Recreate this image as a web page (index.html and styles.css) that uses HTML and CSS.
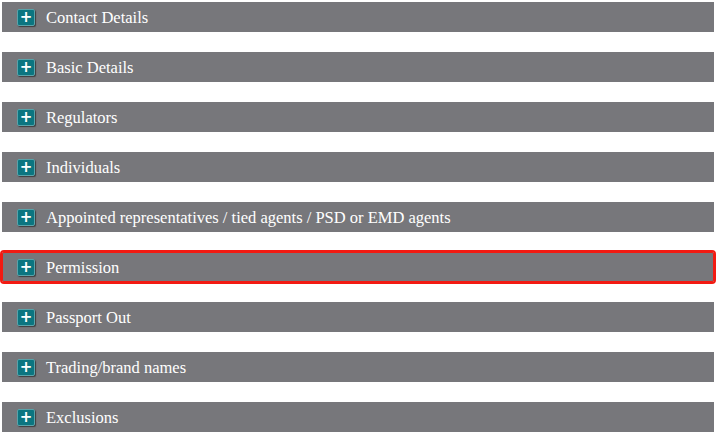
FILE: index.html
```html
<!DOCTYPE html>
<html lang="en">
<head>
    <meta charset="UTF-8">
    <title>Firm details</title>
    <link rel="stylesheet" href="styles.css">
</head>
<body>
    <div class="sections">
        <div class="section"><span class="toggle">+</span><span class="title">Contact Details</span></div>
        <div class="section"><span class="toggle">+</span><span class="title">Basic Details</span></div>
        <div class="section"><span class="toggle">+</span><span class="title">Regulators</span></div>
        <div class="section"><span class="toggle">+</span><span class="title">Individuals</span></div>
        <div class="section"><span class="toggle">+</span><span class="title">Appointed representatives / tied agents / PSD or EMD agents</span></div>
        <div class="section active"><span class="toggle">+</span><span class="title">Permission</span></div>
        <div class="section"><span class="toggle">+</span><span class="title">Passport Out</span></div>
        <div class="section"><span class="toggle">+</span><span class="title">Trading/brand names</span></div>
        <div class="section"><span class="toggle">+</span><span class="title">Exclusions</span></div>
    </div>
</body>
</html>
```
FILE: styles.css
```css
body{margin:0;background:#fff;font:16.5px/1 "Liberation Serif","DejaVu Serif",serif;}
.sections{padding:2px 3px 0 2px;}
.section{
    display:flex;
    align-items:center;
    height:30px;
    margin-bottom:20px;
    background-color:#77777b;
    color:#fff;
}
.section.active{outline:2px solid #f21a12;outline-offset:0;border-radius:2px;box-shadow:0 0 0 1px #f21a12 inset;}
.toggle{
    box-sizing:border-box;
    width:18px;
    height:17px;
    margin:0 11px 0 15px;
    border:1px solid #5aa3aa;
    border-radius:2px;
    background-color:#0b7580;
    box-shadow:1px 1px 1px #3e3e40;
    color:#fff;
    font:bold 15px/14px "DejaVu Sans",sans-serif;
    text-align:center;
}
.title{padding-top:3px;}
```
